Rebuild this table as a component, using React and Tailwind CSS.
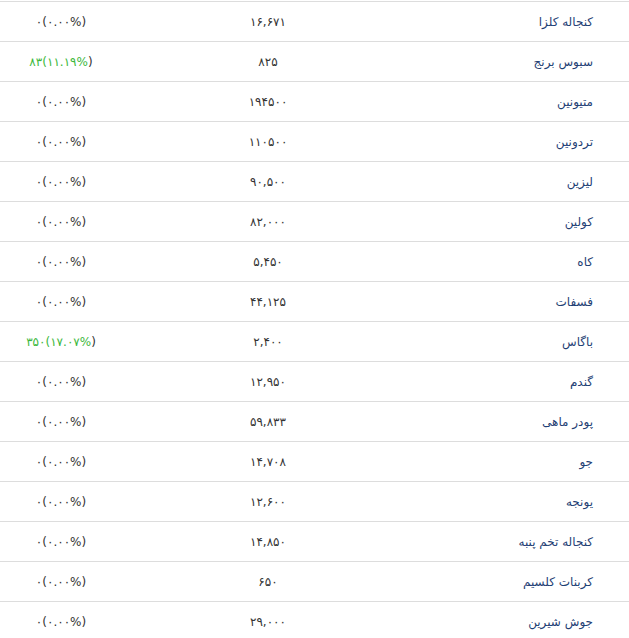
import React from "react";

const rows = [
  ["کنجاله کلزا", "۱۶,۶۷۱", null],
  ["سبوس برنج", "۸۲۵", ["۸۳", "۱۱.۱۹%"]],
  ["متیونین", "۱۹۴۵۰۰", null],
  ["تردونین", "۱۱۰۵۰۰", null],
  ["لیزین", "۹۰,۵۰۰", null],
  ["کولین", "۸۲,۰۰۰", null],
  ["کاه", "۵,۴۵۰", null],
  ["فسفات", "۴۴,۱۲۵", null],
  ["باگاس", "۲,۴۰۰", ["۳۵۰", "۱۷.۰۷%"]],
  ["گندم", "۱۲,۹۵۰", null],
  ["پودر ماهی", "۵۹,۸۳۳", null],
  ["جو", "۱۴,۷۰۸", null],
  ["یونجه", "۱۲,۶۰۰", null],
  ["کنجاله تخم پنبه", "۱۴,۸۵۰", null],
  ["کربنات کلسیم", "۶۵۰", null],
  ["جوش شیرین", "۲۹,۰۰۰", null],
];

export default function App() {
  return (
    <div
      className="w-[629px] h-[638px] overflow-hidden bg-white pt-px text-[12px]"
      style={{ fontFamily: '"DejaVu Sans", sans-serif' }}
    >
      {rows.map(([name, price, change], i) => (
        <div
          key={i}
          className="grid grid-cols-[122px_292px_1fr] h-[40px] border-t border-[#dddddd] items-center"
        >
          <div className="text-center" dir="ltr">
            {change ? (
              <span className="text-[#3cb83c]">
                {change[0]}({change[1]}
                <span className="text-[#333]">)</span>
              </span>
            ) : (
              <span className="text-[#333]">۰(۰.۰۰%)</span>
            )}
          </div>
          <div className="text-center text-[#333]" dir="ltr">
            {price}
          </div>
          <div className="text-right pr-[36px] text-[#1f3f75]" dir="rtl">
            {name}
          </div>
        </div>
      ))}
    </div>
  );
}
